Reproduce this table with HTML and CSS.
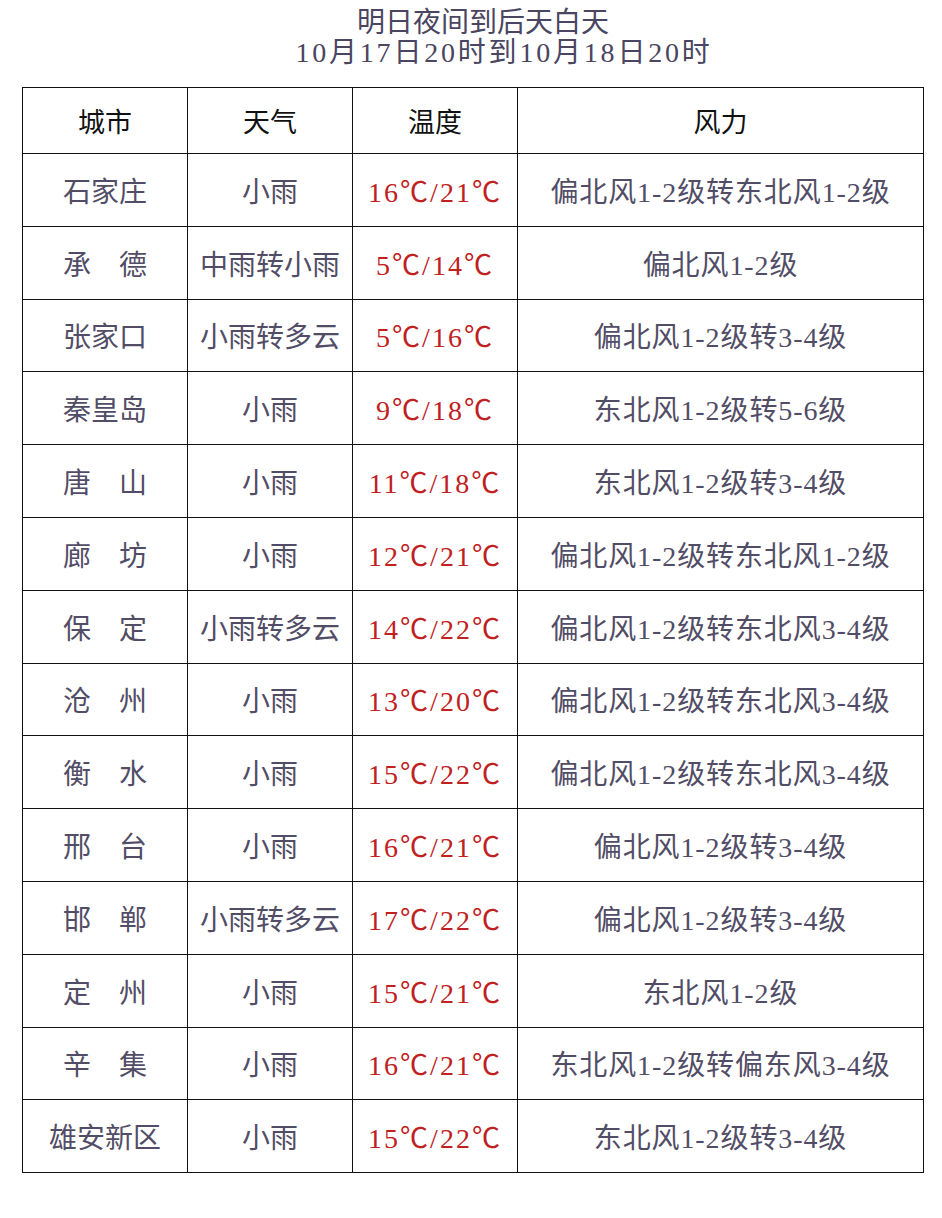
FILE: index.html
```html
<!DOCTYPE html>
<html lang="zh-CN">
<head>
<meta charset="utf-8">
<link rel="stylesheet" href="styles.css">
</head>
<body>
<div class="page">
  <div class="title">
    <div class="t1">明日夜间到后天白天</div>
    <div class="t2">10月17日20时到10月18日20时</div>
  </div>
  <table class="wx">
    <colgroup>
      <col class="c1"><col class="c2"><col class="c3"><col class="c4">
    </colgroup>
    <thead>
      <tr><th>城市</th><th>天气</th><th>温度</th><th>风力</th></tr>
    </thead>
    <tbody>
      <tr><td>石家庄</td><td>小雨</td><td class="t">16℃/21℃</td><td class="w">偏北风1-2级转东北风1-2级</td></tr>
      <tr><td>承　德</td><td>中雨转小雨</td><td class="t">5℃/14℃</td><td class="w">偏北风1-2级</td></tr>
      <tr><td>张家口</td><td>小雨转多云</td><td class="t">5℃/16℃</td><td class="w">偏北风1-2级转3-4级</td></tr>
      <tr><td>秦皇岛</td><td>小雨</td><td class="t">9℃/18℃</td><td class="w">东北风1-2级转5-6级</td></tr>
      <tr><td>唐　山</td><td>小雨</td><td class="t">11℃/18℃</td><td class="w">东北风1-2级转3-4级</td></tr>
      <tr><td>廊　坊</td><td>小雨</td><td class="t">12℃/21℃</td><td class="w">偏北风1-2级转东北风1-2级</td></tr>
      <tr><td>保　定</td><td>小雨转多云</td><td class="t">14℃/22℃</td><td class="w">偏北风1-2级转东北风3-4级</td></tr>
      <tr><td>沧　州</td><td>小雨</td><td class="t">13℃/20℃</td><td class="w">偏北风1-2级转东北风3-4级</td></tr>
      <tr><td>衡　水</td><td>小雨</td><td class="t">15℃/22℃</td><td class="w">偏北风1-2级转东北风3-4级</td></tr>
      <tr><td>邢　台</td><td>小雨</td><td class="t">16℃/21℃</td><td class="w">偏北风1-2级转3-4级</td></tr>
      <tr><td>邯　郸</td><td>小雨转多云</td><td class="t">17℃/22℃</td><td class="w">偏北风1-2级转3-4级</td></tr>
      <tr><td>定　州</td><td>小雨</td><td class="t">15℃/21℃</td><td class="w">东北风1-2级</td></tr>
      <tr><td>辛　集</td><td>小雨</td><td class="t">16℃/21℃</td><td class="w">东北风1-2级转偏东风3-4级</td></tr>
      <tr><td>雄安新区</td><td>小雨</td><td class="t">15℃/22℃</td><td class="w">东北风1-2级转3-4级</td></tr>
    </tbody>
  </table>
</div>
</body>
</html>
```

FILE: styles.css
```css
html, body {
  margin: 0;
  padding: 0;
  background: #ffffff;
}

.page {
  width: 942px;
  font-family: "Liberation Serif", "Noto Sans CJK SC", serif;
  color: #524d66;
}

.title {
  padding-top: 8px;
  height: 87px;
  box-sizing: border-box;
  font-size: 28px;
  line-height: 30px;
  color: #4a4560;
}

.t1 {
  text-align: center;
  padding-left: 24px;
}

.t2 {
  text-align: center;
  padding-left: 66px;
  letter-spacing: 2.8px;
}

.wx {
  margin-left: 22px;
  border-collapse: collapse;
  table-layout: fixed;
  width: 901px;
}

.c1, .c2, .c3 { width: 165px; }
.c4 { width: 406px; }

.wx th, .wx td {
  border: 1.6px solid #111;
  text-align: center;
  vertical-align: middle;
  padding: 0;
  white-space: nowrap;
  font-size: 28px;
}

.wx th {
  height: 65px;
  font-weight: normal;
  color: #111;
  font-size: 27px;
}

.wx td {
  height: 71.8px;
}

.wx td.t {
  color: #c0201e;
  letter-spacing: 2px;
}

.wx td.w {
  letter-spacing: 0.9px;
}
```
